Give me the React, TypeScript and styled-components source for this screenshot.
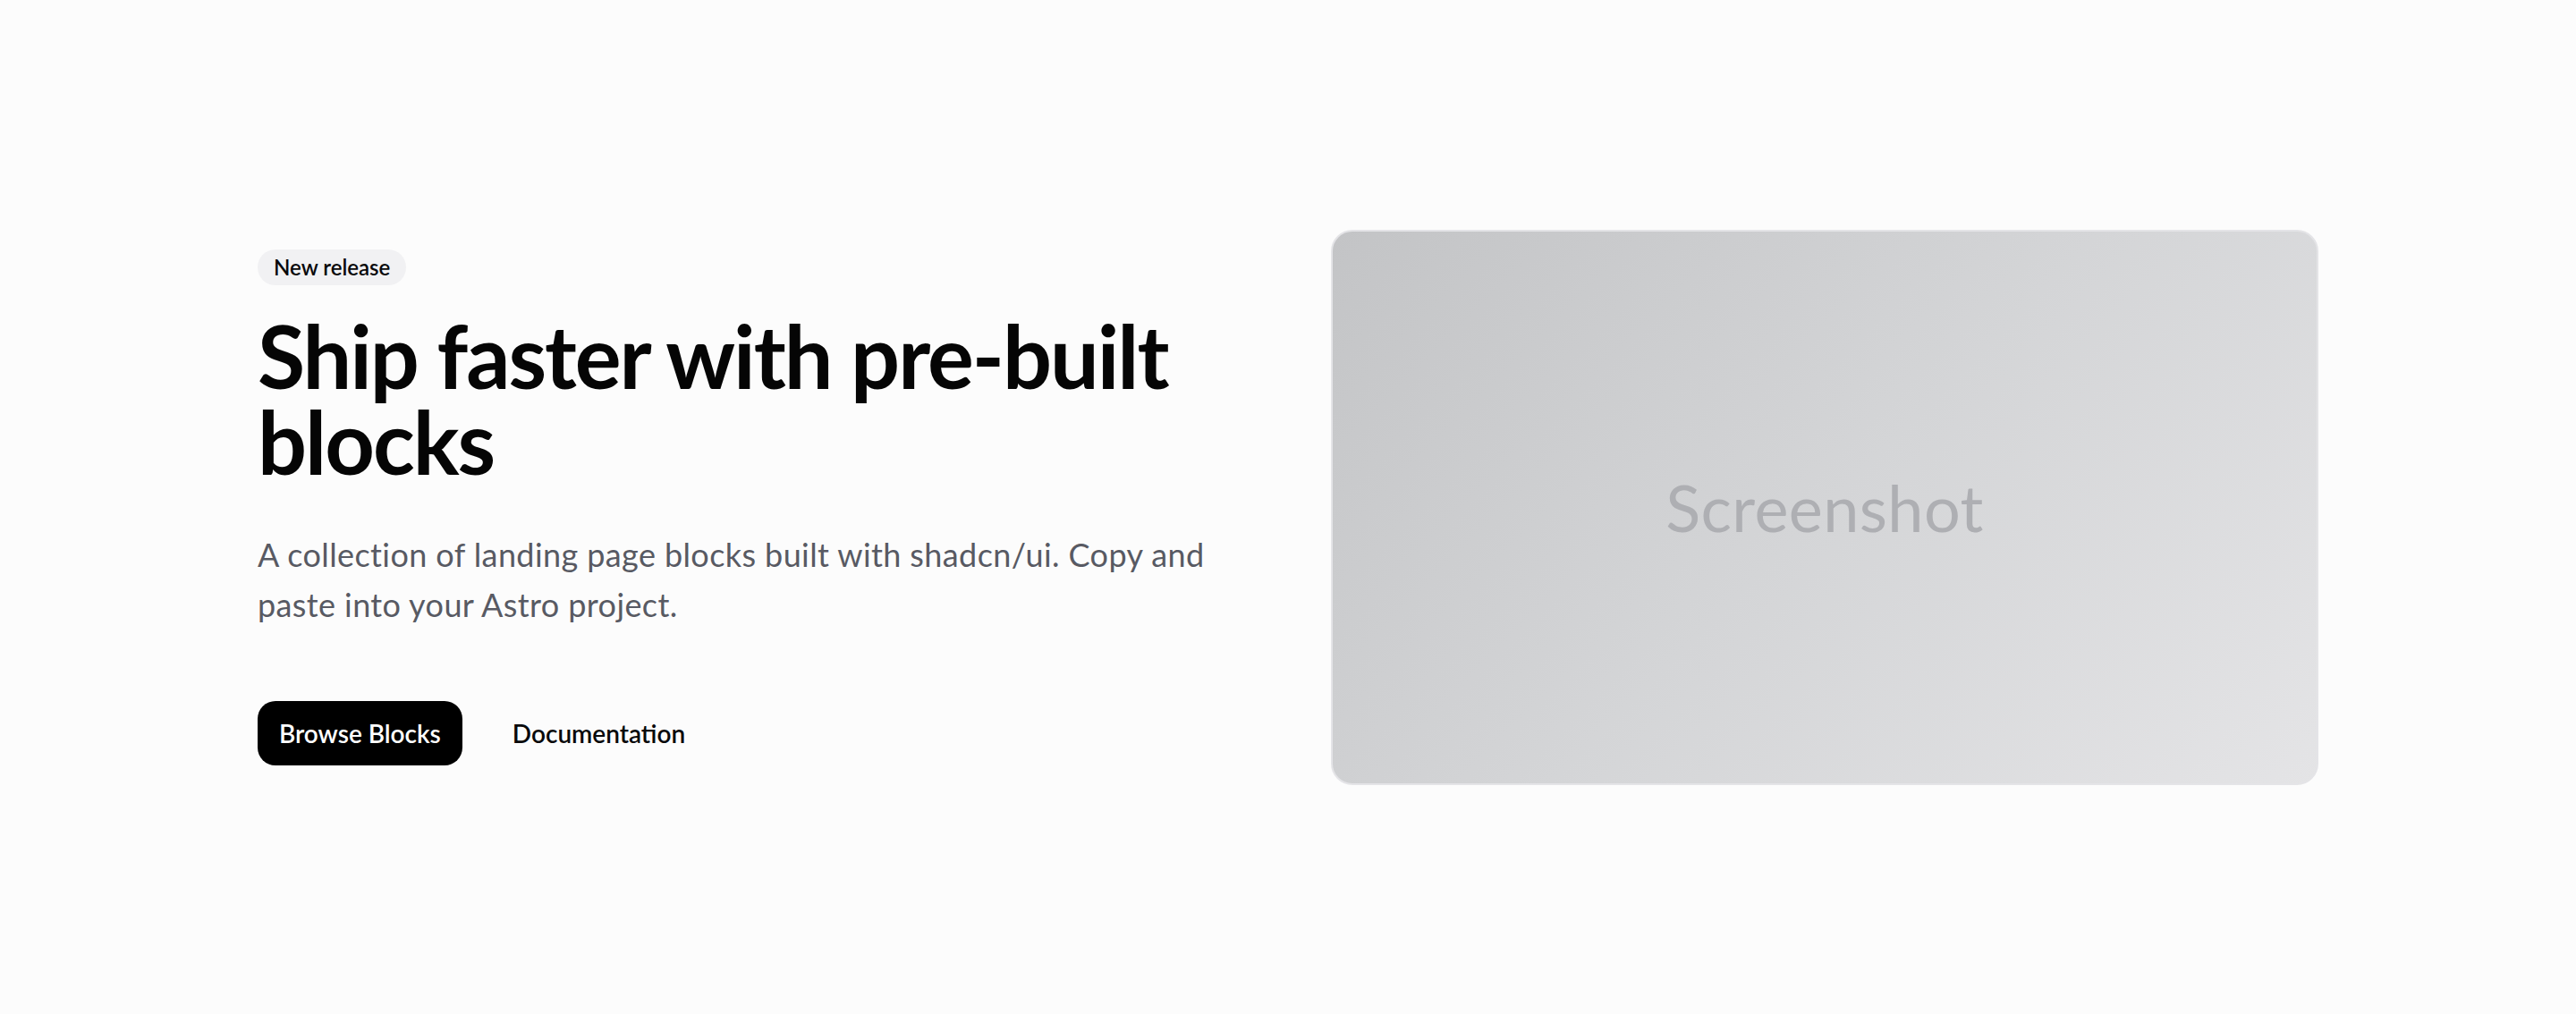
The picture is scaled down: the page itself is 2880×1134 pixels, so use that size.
import React from 'react'
import styled, { createGlobalStyle } from 'styled-components'

const GlobalStyle = createGlobalStyle`
  * {
    box-sizing: border-box;
  }
  body {
    margin: 0;
    background-color: #FCFCFC;
    font-family: Lato, 'Noto Sans', sans-serif;
    color: #09090B;
  }
`

const Section = styled.section`
  min-height: 100vh;
  display: flex;
  align-items: center;
  justify-content: center;
`

const Container = styled.div`
  width: 2304px;
  display: grid;
  grid-template-columns: 1fr 1fr;
  gap: 96px;
  align-items: center;
`

const Content = styled.div`
  display: flex;
  flex-direction: column;
  align-items: flex-start;
`

const Badge = styled.span`
  display: inline-flex;
  align-items: center;
  height: 40px;
  padding: 0 18px;
  border-radius: 20px;
  background-color: #F1F1F3;
  font-size: 24px;
  font-weight: 600;
  color: #09090B;
`

const Title = styled.h1`
  margin: 31px 0 0;
  font-size: 97px;
  line-height: 96px;
  font-weight: 700;
  letter-spacing: -2px;
  color: #050505;
`

const Description = styled.p`
  margin: 50px 0 0;
  font-size: 36px;
  line-height: 56px;
  letter-spacing: 0.4px;
  color: #585A63;
  max-width: 1104px;
`

const Actions = styled.div`
  display: flex;
  align-items: center;
  gap: 32px;
  margin-top: 80px;
`

const Button = styled.a<{ $variant?: 'primary' | 'ghost' }>`
  display: inline-flex;
  align-items: center;
  justify-content: center;
  height: 72px;
  padding: 0 24px;
  border-radius: 20px;
  font-size: 28px;
  font-weight: 600;
  text-decoration: none;
  background-color: ${p => (p.$variant === 'primary' ? '#000000' : 'transparent')};
  color: ${p => (p.$variant === 'primary' ? '#FFFFFF' : '#09090B')};
`

const Preview = styled.div`
  aspect-ratio: 16 / 9;
  width: 100%;
  border: 2px solid #E4E4E7;
  border-radius: 24px;
  background: linear-gradient(135deg, #C3C4C6 0%, #D4D5D7 50%, #E4E4E6 100%);
  display: flex;
  align-items: center;
  justify-content: center;
`

const PreviewLabel = styled.span`
  font-size: 72px;
  font-weight: 400;
  letter-spacing: 0.4px;
  color: #AEAFB3;
`

const App: React.FC = () => {
  return (
    <>
      <GlobalStyle />
      <Section>
        <Container>
          <Content>
            <Badge>New release</Badge>
            <Title>
              Ship faster with pre-built blocks
            </Title>
            <Description>
              A collection of landing page blocks built with shadcn/ui. Copy and paste into your Astro project.
            </Description>
            <Actions>
              <Button $variant="primary" href="#">Browse Blocks</Button>
              <Button $variant="ghost" href="#">Documentation</Button>
            </Actions>
          </Content>
          <Preview>
            <PreviewLabel>Screenshot</PreviewLabel>
          </Preview>
        </Container>
      </Section>
    </>
  )
}

export default App
